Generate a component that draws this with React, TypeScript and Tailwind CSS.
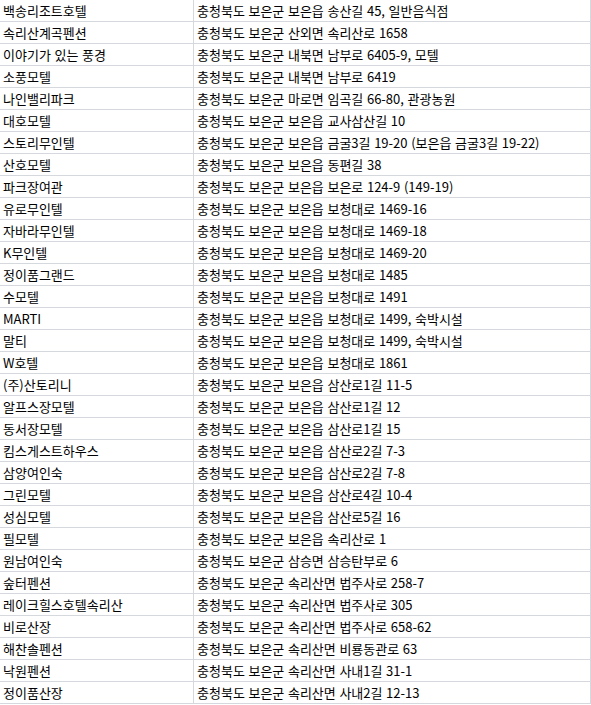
const rows: [string, string][] = [
  ['백송리조트호텔', '충청북도 보은군 보은읍 송산길 45, 일반음식점'],
  ['속리산계곡펜션', '충청북도 보은군 산외면 속리산로 1658'],
  ['이야기가 있는 풍경', '충청북도 보은군 내북면 남부로 6405-9, 모텔'],
  ['소풍모텔', '충청북도 보은군 내북면 남부로 6419'],
  ['나인밸리파크', '충청북도 보은군 마로면 임곡길 66-80, 관광농원'],
  ['대호모텔', '충청북도 보은군 보은읍 교사삼산길 10'],
  ['스토리무인텔', '충청북도 보은군 보은읍 금굴3길 19-20 (보은읍 금굴3길 19-22)'],
  ['산호모텔', '충청북도 보은군 보은읍 동편길 38'],
  ['파크장여관', '충청북도 보은군 보은읍 보은로 124-9 (149-19)'],
  ['유로무인텔', '충청북도 보은군 보은읍 보청대로 1469-16'],
  ['자바라무인텔', '충청북도 보은군 보은읍 보청대로 1469-18'],
  ['K무인텔', '충청북도 보은군 보은읍 보청대로 1469-20'],
  ['정이품그랜드', '충청북도 보은군 보은읍 보청대로 1485'],
  ['수모텔', '충청북도 보은군 보은읍 보청대로 1491'],
  ['MARTI', '충청북도 보은군 보은읍 보청대로 1499, 숙박시설'],
  ['말티', '충청북도 보은군 보은읍 보청대로 1499, 숙박시설'],
  ['W호텔', '충청북도 보은군 보은읍 보청대로 1861'],
  ['(주)산토리니', '충청북도 보은군 보은읍 삼산로1길 11-5'],
  ['알프스장모텔', '충청북도 보은군 보은읍 삼산로1길 12'],
  ['동서장모텔', '충청북도 보은군 보은읍 삼산로1길 15'],
  ['킴스게스트하우스', '충청북도 보은군 보은읍 삼산로2길 7-3'],
  ['삼양여인숙', '충청북도 보은군 보은읍 삼산로2길 7-8'],
  ['그린모텔', '충청북도 보은군 보은읍 삼산로4길 10-4'],
  ['성심모텔', '충청북도 보은군 보은읍 삼산로5길 16'],
  ['필모텔', '충청북도 보은군 보은읍 속리산로 1'],
  ['원남여인숙', '충청북도 보은군 삼승면 삼승탄부로 6'],
  ['숲터펜션', '충청북도 보은군 속리산면 법주사로 258-7'],
  ['레이크힐스호텔속리산', '충청북도 보은군 속리산면 법주사로 305'],
  ['비로산장', '충청북도 보은군 속리산면 법주사로 658-62'],
  ['해찬솔펜션', '충청북도 보은군 속리산면 비룡동관로 63'],
  ['낙원펜션', '충청북도 보은군 속리산면 사내1길 31-1'],
  ['정이품산장', '충청북도 보은군 속리산면 사내2길 12-13'],
];

export default function App() {
  return (
    <div className="w-[591px] bg-white text-[13px] text-black [word-spacing:0.7px] [font-family:'Malgun_Gothic','Noto_Sans_CJK_KR',sans-serif]">
      {rows.map(([name, addr], i) => (
        <div key={i} className="grid grid-cols-[194px_397px] h-[22px]">
          <div className="border-b border-r border-[#d5d8dc] pl-[3px] leading-[21px] whitespace-nowrap overflow-hidden">
            {name}
          </div>
          <div className="border-b border-r border-[#d5d8dc] pl-[3px] leading-[21px] whitespace-nowrap overflow-hidden">
            {addr}
          </div>
        </div>
      ))}
    </div>
  );
}
